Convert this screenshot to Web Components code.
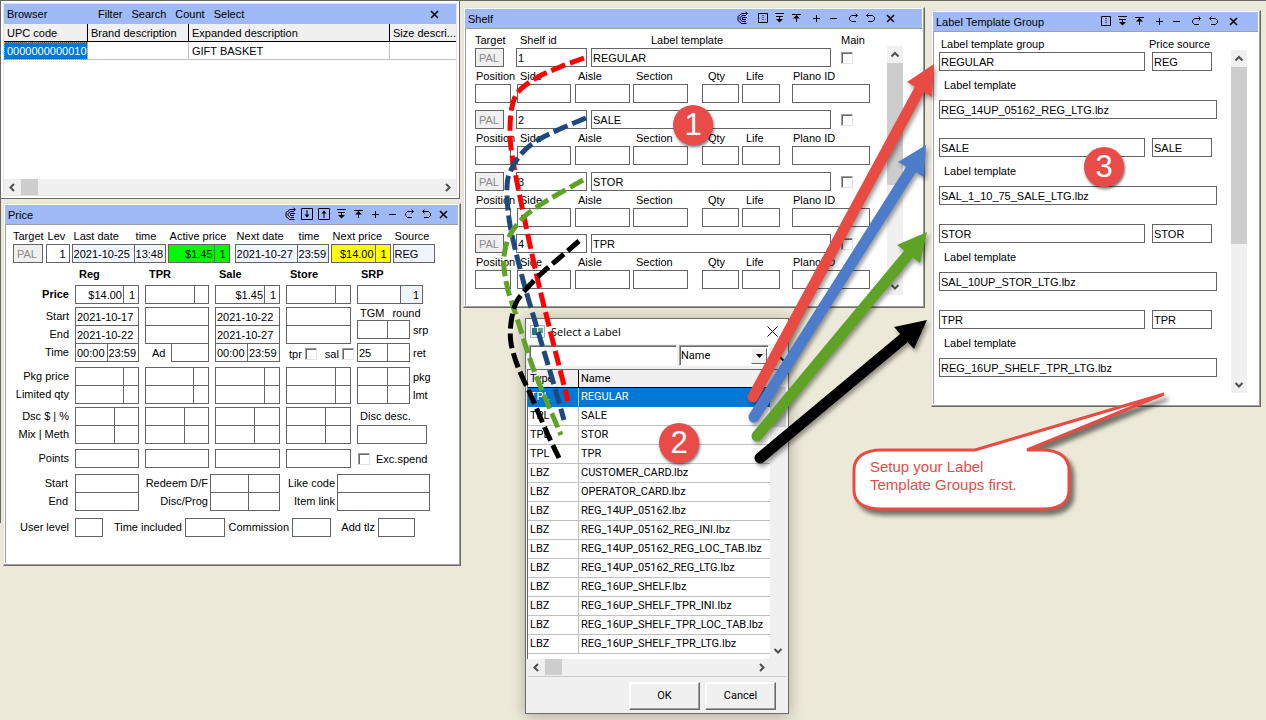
<!DOCTYPE html>
<html lang="en">
<head>
<meta charset="utf-8">
<title>Shelf label setup</title>
<style>
  html, body { margin: 0; }
  body { font: 11px/16px "Liberation Sans", Arial, sans-serif; color: #000; background: #ece9d8; }
</style>
</head>
<body>
<label-desktop></label-desktop>

<script>
const define = (name, html, setup) => {
  const template = document.createElement('template');
  customElements.define(name, class extends HTMLElement {
    constructor() {
      super();
      this.attachShadow({ mode: 'open' });
    }
    connectedCallback() {
      if (this.shadowRoot.childNodes.length) return;
      template.innerHTML = typeof html === 'function' ? html(this) : html;
      this.shadowRoot.append(template.content.cloneNode(true));
      if (setup) setup(this);
    }
  });
};

/* Styles shared by every form panel */
const formCss = `
  * { box-sizing: border-box; }
  label, .lab { white-space: nowrap; display: block; }
  input { font: inherit; color: inherit; border: 0; margin: 0; padding: 0 3px; min-width: 0; width: 100%; height: 17px; background: #fff; border-radius: 0; outline: 0; display: block; }
  .box { background: #646464; padding: 1px; display: grid; gap: 1px; }
  .line { display: grid; gap: 1px; }
  .r { text-align: right; }
  .one { padding-right: 5px; }
  .off { background: #f0f0f0; color: #8a8a8a; }
  .pale { background: #f0f4fc; }
  .green { background: #00f800; }
  .yellow { background: #ffff00; }
  .row { display: flex; }
  input[type=checkbox] { appearance: none; flex: none; width: 12px; height: 12px; padding: 0; border: 1px solid; border-color: #a0a0a0 #e3e3e3 #e3e3e3 #a0a0a0; box-shadow: inset 1px 1px #696969; }
`;
let serial = 0;
const cell = (value = '', name = '', cls = '', id = '') =>
  `<input type="text" id="${id || 'f' + ++serial}" value="${value}" aria-label="${name}" class="${cls}">`;
const line = (cols, ...cells) => `<div class="line" style="grid-template-columns:${cols}">${cells.join('')}</div>`;
const box = (width, ...lines) => `<div class="box" style="width:${width}px">${lines.join('')}</div>`;
const single = (width, value, name, cls, id) => box(width, line('1fr', cell(value, name, cls, id)));

/* Tool icons */
const icons = {
  at: '<path d="M13 3.500H8L4 6.500v4L7.500 13.500h5M12 5.500H8.500L6 7.500v2l2.500 2H12M13 7.500H8.500v2H12M11.500 2l2 1.500-2 2"/>',
  boxdown: '<path d="M2.500 2.500h11v11h-11zM8 4v7"/><path d="M5.500 8.500h5L8 11.500z" fill="#000" stroke="none"/>',
  boxup: '<path d="M2.500 2.500h11v11h-11zM8 5v7"/><path d="M5.500 7.500h5L8 4.500z" fill="#000" stroke="none"/>',
  boxdots: '<path d="M4.500 3.500h9v9h-9z"/><path d="M9 5v6" stroke-dasharray="1 1"/>',
  down: '<path d="M4 3.500h9M5 6.500h7M8.500 6v5"/><path d="M5 9h7l-3.500 3.500z" fill="#000" stroke="none"/>',
  up: '<path d="M4 4.500h9M8.500 6v6"/><path d="M5 8.500h7L8.500 5z" fill="#000" stroke="none"/>',
  plus: '<path d="M5 8.500h7M8.500 5v7"/>',
  minus: '<path d="M5 8.500h7"/>',
  redo: '<path d="M12 5.500H6.500L4.500 7.500v2l2 2H11M10.500 3.500l2 2-2 2"/>',
  undo: '<path d="M5 5.500h5.500L12.500 7.500v2l-2 2H6M6.500 3.500l-2 2 2 2"/>',
  close: '<path d="M5 5l7 7M12 5l-7 7" stroke-width="1.600"/>'
};
define('tool-button', el => `<style>
  :host { display: block; width: 17px; height: 17px; }
  :host([apart]) { margin-left: 3px; }
  button { all: unset; display: block; width: 17px; height: 17px; }
  svg { display: block; fill: none; stroke: #000; }
</style><button aria-label="${el.getAttribute('icon')}"><svg width="17" height="17" viewBox="0 0 17 17">${icons[el.getAttribute('icon')]}</svg></button>`);

/* Scroll bar: --size sets the thumb */
define('scroll-bar', el => {
  const flat = el.hasAttribute('flat');
  const arrow = d => `<svg width="17" height="17" viewBox="0 0 17 17"><path d="${d}"/></svg>`;
  return `<style>
  :host { display: flex; flex-direction: ${flat ? 'row' : 'column'}; justify-content: space-between; background: #f0f0f0; flex: none; ${flat ? 'height' : 'width'}: 16px; }
  svg { display: block; flex: none; fill: none; stroke: #505050; stroke-width: 2; }
  i { flex: 0 0 var(--size, 17px); background: #cdcdcd; margin-${flat ? 'right' : 'bottom'}: auto; }
</style>${arrow(flat ? 'M10 5L6.500 8.500l3.500 3.500' : 'M4.500 10.500L8 7l3.500 3.500')}<i></i>${arrow(flat ? 'M7 5l3.500 3.500L7 12' : 'M4.500 7L8 10.500 11.500 7')}`;
});

/* Raised window frame with a title bar */
define('app-window', `<style>
  :host { display: block; background: #fff; border: 1px solid; border-color: #e3e3e3 #696969 #696969 #e3e3e3; box-shadow: inset -1px -1px #a0a0a0, inset 1px 1px #fff; padding: 1px 2px 2px 1px; box-sizing: border-box; }
  header { display: flex; align-items: center; height: 19px; padding: 0 6px 0 3px; background: #a0b9f7; }
  :host([inset="far"]) header { padding-right: 23px; }
  :host([inset="mid"]) header { padding-right: 16px; }
  h2 { font: inherit; margin: 0; flex: 1; }
  .tools { display: flex; }
  section { border: solid #a0a0a0; border-width: 1px 0 0 1px; }
</style><header><h2><slot name="title"></slot></h2><div class="tools"><slot name="tools"></slot></div></header><section><slot></slot></section>`);
const tools = list => list.split(' ').map(n =>
  `<tool-button slot="tools" icon="${n.replace('*', '')}" ${n.includes('*') ? 'apart' : ''}></tool-button>`).join('');

/* Item browser */
define('item-browser', `<style>
  :host { display: block; background: #fff; border: solid #696969; border-width: 1px; box-sizing: border-box; padding: 2px; }
  .inner { border: 1px solid #e3e3e3; }
  header { display: flex; align-items: center; height: 20px; background: #a0b9f7; padding: 0 13px 0 3px; }
  h2 { font: inherit; margin: 0; width: 91px; }
  nav { display: flex; gap: 9px; flex: 1; }
  nav button { all: unset; }
  .pane { min-height: 155px; }
  table { border-collapse: separate; border-spacing: 0; table-layout: fixed; width: 100%; }
  th { font: inherit; text-align: left; background: #f0f0f0; border: solid #000; border-width: 0 1px 1px 0; }
  th, td { height: 18px; padding: 1px 2px 0 3px; white-space: nowrap; overflow: hidden; line-height: 16px; box-sizing: border-box; }
  td { border: solid #c0c0c0; border-width: 0 1px 1px 0; }
  th:last-child, td:last-child { border-right: 0; }
  td.sel { background: #0078d7; color: #fff; outline: 1px dotted #f08020; outline-offset: -1px; }
</style>
<div class="inner"><header><h2>Browser</h2><nav><button>Filter</button><button>Search</button><button>Count</button><button>Select</button></nav><tool-button icon="close"></tool-button></header>
<div class="pane"><table><colgroup><col style="width:84px"><col style="width:101px"><col style="width:201px"><col></colgroup>
<thead><tr><th>UPC code</th><th>Brand description</th><th>Expanded description</th><th>Size descri...</th></tr></thead>
<tbody><tr><td class="sel">0000000000010</td><td></td><td>GIFT BASKET</td><td></td></tr></tbody></table></div>
<scroll-bar flat></scroll-bar></div>`);

/* Price panel */
define('price-panel', () => {
  const priced = (w, first, v, n, name) => box(w, line(`${first}px 1fr`, cell(v, name + ' price', 'r tight'), cell(n, name + ' quantity', 'r')));
  const grid2 = (w, first, name) => box(w, ...[1, 2].map(i => line(`${first}px 1fr`, cell('', `${name} ${i}`), cell('', `${name} ${i} quantity`))));
  const dates = (w, a, b, name, times) => box(w, line('1fr', cell(a, name + ' start', 'tight')), line('1fr', cell(b, name + ' end', 'tight')),
    times ? line('1fr 1fr', cell(times[0], name + ' from', 'tight'), cell(times[1], name + ' to', 'tight')) : '');
  const head = (cols, labels, content, cls = '') => `<div class="${cls}"><div class="heads" style="grid-template-columns:${cols}">${labels}</div>${content}</div>`;
  return `<style>${formCss}
  :host { display: block; padding: 3px 0 26px; }
  .top { display: flex; gap: 2px; padding-left: 7px; }
  .heads { display: grid; height: 16px; }
  .heads label { padding-left: 2px; }
  .heads label.flush { padding-left: 0; }
  .later { margin-left: 3px; }
  .grid { display: grid; grid-template-columns: 63px 64px 64px 65px 65px 1fr; column-gap: 6px; }
  .bold { font-weight: bold; line-height: 22px; }
  .bold span { padding-left: 4px; }
  .left label, .left b { text-align: right; line-height: 18px; display: block; }
  .g3 { margin-bottom: 3px; } .g5 { margin-bottom: 5px; } .g6 { margin-bottom: 6px; } .g7 { margin-bottom: 7px; }
  .tight { padding: 0 1px; }
  .join { margin-top: -1px; display: flex; justify-content: space-between; align-items: center; }
  .ad { padding-left: 7px; }
  .checks { display: flex; align-items: center; gap: 3px; height: 18px; padding: 2px 4px 0 3px; }
  .checks input + label { padding-left: 5px; }
  .side { display: flex; align-items: center; gap: 3px; }
  .tgm { display: flex; gap: 8px; line-height: 13px; padding-left: 3px; }
  .lower { display: flex; }
  .lower > div.t { text-align: right; line-height: 18px; padding-right: 2px; }
  .foot label { text-align: right; line-height: 18px; padding-right: 3px; }
  .exc { display: flex; align-items: center; gap: 6px; padding-left: 1px; }
  .disc label { line-height: 18px; padding-left: 3px; }
</style>
<div class="top">
  ${head('1fr', '<label for="target" class="flush">Target</label>', single(30, 'PAL', 'Target', 'off', 'target'))}
  ${head('1fr', '<label for="lev">Lev</label>', single(24, '1', 'Lev', 'r', 'lev'))}
  ${head('62px 1fr', '<label for="ld">Last date</label><label for="lt">time</label>', box(94, line('61px 1fr', cell('2021-10-25', 'Last date', 'pale tight', 'ld'), cell('13:48', 'Last time', 'pale tight', 'lt'))))}
  ${head('1fr', '<label for="ap">Active price</label>', box(62, line('45px 1fr', cell('$1.45', 'Active price', 'green r tight', 'ap'), cell('1', 'Active quantity', 'green r'))))}
  ${head('62px 1fr', '<label for="nd">Next date</label><label for="nt">time</label>', box(94, line('61px 1fr', cell('2021-10-27', 'Next date', 'pale tight', 'nd'), cell('23:59', 'Next time', 'pale tight', 'nt'))), 'later')}
  ${head('1fr', '<label for="np">Next price</label>', box(60, line('43px 1fr', cell('$14.00', 'Next price', 'yellow r tight', 'np'), cell('1', 'Next quantity', 'yellow r'))))}
  ${head('1fr', '<label for="so">Source</label>', single(42, 'REG', 'Source', 'pale tight', 'so'))}
</div>
<div class="grid bold"><span></span><span>Reg</span><span>TPR</span><span>Sale</span><span>Store</span><span>SRP</span></div>
<div class="grid left g3"><b>Price</b>${priced(64, 47, '$14.00', '1', 'Reg')}${priced(64, 48, '', '', 'TPR')}${priced(65, 48, '$1.45', '1', 'Sale')}${priced(65, 48, '', '', 'Store')}${box(66, line('42px 1fr', cell('', 'SRP'), cell('1', 'SRP quantity', 'pale r')))}</div>
<div class="grid g5">
  <div class="left"><label>Start</label><label>End</label><label>Time</label></div>
  ${dates(64, '2021-10-17', '2021-10-22', 'Reg', ['00:00', '23:59'])}
  <div>${dates(64, '', '', 'TPR')}<div class="join"><label class="ad" for="ad">Ad</label>${single(38, '', 'Ad', '', 'ad')}</div></div>
  ${dates(65, '2021-10-22', '2021-10-27', 'Sale', ['00:00', '23:59'])}
  <div>${dates(65, '', '', 'Store')}<div class="checks"><label for="ct">tpr</label><input type="checkbox" id="ct"><label for="cs">sal</label><input type="checkbox" id="cs"></div></div>
  <div><div class="tgm"><span>TGM</span><span>round</span></div>
    <div class="side" style="margin-bottom:4px">${box(53, line('29px 1fr', cell('', 'srp TGM', '', 'srp'), cell('', 'srp round')))}<label for="srp">srp</label></div>
    <div class="side">${box(53, line('29px 1fr', cell('25', 'ret TGM', 'tight', 'ret'), cell('', 'ret round')))}<label for="ret">ret</label></div></div>
</div>
<div class="grid g3">
  <div class="left"><label>Pkg price</label><label>Limited qty</label></div>
  ${grid2(64, 47, 'Reg package')}${grid2(64, 47, 'TPR package')}${grid2(65, 48, 'Sale package')}${grid2(65, 48, 'Store package')}
  <div class="side">${grid2(53, 29, 'Package')}<div class="left"><label>pkg</label><label style="text-align:left">lmt</label></div></div>
</div>
<div class="grid g5">
  <div class="left"><label>Dsc $ | %</label><label>Mix | Meth</label></div>
  ${grid2(64, 38, 'Reg discount')}${grid2(64, 38, 'TPR discount')}${grid2(65, 38, 'Sale discount')}${grid2(65, 38, 'Store discount')}
  <div class="disc"><label for="dd">Disc desc.</label>${single(70, '', 'Disc desc.', '', 'dd')}</div>
</div>
<div class="grid left g6"><label>Points</label>${single(64, '', 'Reg points')}${single(64, '', 'TPR points')}${single(65, '', 'Sale points')}${single(65, '', 'Store points')}
  <div class="exc"><input type="checkbox" id="exc"><label for="exc">Exc.spend</label></div></div>
<div class="lower g7">
  <div class="t" style="width:69px;padding-right:7px"><label>Start</label><label>End</label></div>${dates(64, '', '', 'Points')}
  <div class="t" style="width:71px"><label>Redeem D/F</label><label>Disc/Prog</label></div>${grid2(70, 37, 'Redeem')}
  <div class="t" style="width:57px"><label>Like code</label><label>Item link</label></div>${dates(93, '', '', 'Like code')}
</div>
<div class="lower foot">
  <label for="ul" style="width:69px;padding-right:6px">User level</label>${single(28, '', 'User level', '', 'ul')}
  <label for="ti" style="width:82px">Time included</label>${single(40, '', 'Time included', '', 'ti')}
  <label for="co" style="width:67px">Commission</label>${single(39, '', 'Commission', '', 'co')}
  <label for="at" style="width:47px">Add tlz</label>${single(37, '', 'Add tlz', '', 'at')}
</div>`;
});

/* Shelf panel */
define('shelf-panel', () => {
  const subs = [['Position', 36, 6, 1], ['Side', 54, 4, 3], ['Aisle', 55, 3, 3], ['Section', 55, 14, 3], ['Qty', 37, 3, 6], ['Life', 38, 12, 4], ['Plano ID', 78, 0, 1]];
  const shelf = (n, name) => `<div class="shelf"><div class="row main">${single(29, 'PAL', 'Target', 'off', 'target' + n)}${single(71, n, 'Shelf id', 'tight', 'shelf' + n)}${single(240, name, 'Label template', 'tight', 'tpl' + n)}<input type="checkbox" id="main${n}" aria-label="Main"></div>
  <div class="row">${subs.map(([t, w, g, i]) => `<div style="width:${w}px;margin-right:${g}px"><label for="${t[0]}${t[1]}${n}" style="padding-left:${i}px">${t}</label>${single(w, '', t, '', t[0] + t[1] + n)}</div>`).join('')}</div></div>`;
  return `<style>${formCss}
  :host { display: flex; gap: 17px; padding: 3px 0 10px 9px; }
  .heads { display: grid; grid-template-columns: 45px 131px 190px 1fr; }
  .shelves { padding-bottom: 6px; }
  .shelf + .shelf { margin-top: 7px; }
  .shelf label { line-height: 16px; padding-top: 1px; }
  .tight { padding: 0 1px; }
  .main { align-items: center; }
  .main > :nth-child(1) { margin-right: 12px; }
  .main > :nth-child(2) { margin-right: 4px; }
  .main > :nth-child(3) { margin-right: 10px; }
  scroll-bar { margin-top: 14px; --size: 122px; }
</style><div class="shelves"><div class="heads"><label for="target1">Target</label><label for="shelf1">Shelf id</label><label for="tpl1">Label template</label><label for="main1">Main</label></div>
${['REGULAR', 'SALE', 'STOR', 'TPR'].map((s, i) => shelf(i + 1, s)).join('')}</div><scroll-bar></scroll-bar>`;
});

/* Label template groups */
define('group-panel', () => {
  const group = ([name, src, tpl], i) => `<div class="group"><div class="row">${single(206, name, 'Label template group', '', 'g' + i)}${single(60, src, 'Price source', '', 's' + i)}</div><label for="t${i}">Label template</label>${single(278, tpl, 'Label template', '', 't' + i)}</div>`;
  return `<style>${formCss}
  :host { display: flex; gap: 14px; padding: 4px 0 11px 5px; }
  .heads { display: grid; grid-template-columns: 208px 1fr; padding-left: 2px; }
  .groups { padding-bottom: 16px; }
  input { padding: 0 1px; }
  .row { gap: 7px; }
  .group label { line-height: 29px; padding-left: 5px; }
  .group + .group { margin-top: 19px; }
  scroll-bar { margin-top: 14px; --size: 177px; }
</style><div class="groups"><div class="heads"><label for="g0">Label template group</label><label for="s0">Price source</label></div>
${[['REGULAR', 'REG', 'REG_14UP_05162_REG_LTG.lbz'], ['SALE', 'SALE', 'SAL_1_10_75_SALE_LTG.lbz'], ['STOR', 'STOR', 'SAL_10UP_STOR_LTG.lbz'], ['TPR', 'TPR', 'REG_16UP_SHELF_TPR_LTG.lbz']].map(group).join('')}</div><scroll-bar></scroll-bar>`;
});

/* Label picker dialog */
define('label-picker', () => {
  const rows = ['TPL REGULAR', 'TPL SALE', 'TPL STOR', 'TPL TPR', ...['CUSTOMER_CARD', 'OPERATOR_CARD', 'REG_14UP_05162', 'REG_14UP_05162_REG_INI', 'REG_14UP_05162_REG_LOC_TAB', 'REG_14UP_05162_REG_LTG', 'REG_16UP_SHELF', 'REG_16UP_SHELF_TPR_INI', 'REG_16UP_SHELF_TPR_LOC_TAB', 'REG_16UP_SHELF_TPR_LTG'].map(n => `LBZ ${n}.lbz`)];
  return `<style>
  * { box-sizing: border-box; }
  :host { display: block; box-sizing: border-box; border: 1px solid #6b6b6b; background: #f0f0f0; box-shadow: 0 2px 14px rgba(0,0,0,.28); font-family: Roboto, "Liberation Sans", sans-serif; }
  header { display: flex; align-items: center; height: 25px; background: #fff; padding: 0 9px 0 4px; gap: 6px; }
  h2 { font: 11px/16px "Open Sans", sans-serif; margin: 0; flex: 1; }
  header button { all: unset; height: 13px; }
  svg { display: block; }
  .find { display: flex; gap: 2px; padding: 1px 3px 3px 3px; }
  .find input, .pick { font: inherit; height: 21px; background: #fff; border: 1px solid; border-color: #a0a0a0 #fff #fff #a0a0a0; box-shadow: inset 1px 1px #696969; border-radius: 0; padding: 0 3px; outline: 0; }
  .find input { width: 148px; }
  .pick { display: flex; width: 91px; padding: 2px 1px 1px 1px; }
  select { appearance: none; border: 0; background: none; font: inherit; padding: 0; width: 100%; color: #000; border-radius: 0; }
  .drop { flex: 0 0 16px; background: #f0f0f0; border: 1px solid; border-color: #fff #696969 #696969 #fff; display: grid; place-items: center; }
  .go { all: unset; padding: 6px 0 0 7px; }
  .list { display: flex; margin: 0 2px 0 1px; border: 1px solid #696969; border-right: 0; border-bottom: 0; background: #fff; }
  table { border-collapse: separate; border-spacing: 0; table-layout: fixed; width: 100%; background: #fff; margin-bottom: 5px; }
  .wrap { flex: 1; min-width: 0; }
  th { font: inherit; text-align: left; height: 18px; background: #f0f0f0; border: solid #000; border-width: 0 1px 1px 0; padding: 0 2px; }
  td { height: 19px; padding: 0 2px; border: solid #c0c0c0; border-width: 0 1px 1px 0; white-space: nowrap; }
  th:last-child, td:last-child { border-right: 0; }
  tr.sel td { background: #0078d7; color: #fff; border-bottom-color: #0078d7; }
  .list scroll-bar { --size: 40px; }
  .across { margin: 0 18px 0 2px; }
  footer { display: flex; justify-content: flex-end; gap: 5px; margin: 1px 2px 0; padding: 5px 10px 3px; border-top: 1px solid #c8c8c8; }
  footer button { font: inherit; width: 71px; height: 28px; background: #f0f0f0; border: 1px solid; border-color: #fff #696969 #696969 #fff; box-shadow: inset -1px -1px #a0a0a0, inset 1px 1px #fff; border-radius: 0; padding: 0; color: #000; }
</style>
<header><svg width="15" height="14" viewBox="0 0 15 14"><path d="M.5.5h14v12H.5z" fill="#eef2f4" stroke="#a8b4ba"/><path d="M2 3h5v7H2z" fill="#2f6f8a"/><path d="M8 3h5v5H8z" fill="#5fa58c"/></svg><h2>Select a Label</h2><button aria-label="Close"><svg width="13" height="13" viewBox="0 0 13 13"><path d="M1.500 1.500l10 10M11.500 1.500l-10 10" stroke="#000"/></svg></button></header>
<div class="find"><input type="text" aria-label="Find"><div class="pick"><select aria-label="Search by"><option>Name</option></select><span class="drop"><svg width="7" height="4" viewBox="0 0 7 4"><path d="M0 0h7L3.500 4z"/></svg></span></div><button class="go" aria-label="Search"><svg width="7" height="7" viewBox="0 0 7 7"><path d="M1 1l5 5" stroke="#000" stroke-width="2"/></svg></button></div>
<div class="list"><div class="wrap"><table><colgroup><col style="width:51px"><col></colgroup><thead><tr><th>Type</th><th>Name</th></tr></thead><tbody>
${rows.map((r, i) => `<tr${i ? '' : ' class="sel"'}><td>${r.slice(0, 3)}</td><td>${r.slice(4)}</td></tr>`).join('')}</tbody></table></div><scroll-bar></scroll-bar></div>
<scroll-bar class="across" flat></scroll-bar>
<footer><button>OK</button><button>Cancel</button></footer>`;
});

/* Numbered marker */
define('step-badge', `<style>
  :host { display: grid; place-items: center; width: 40px; height: 40px; border-radius: 50%; background: #e94b48; color: #fff; font-size: 31px; line-height: 40px; box-shadow: 1px 2px 3px rgba(0,0,0,.55); }
</style><slot></slot>`);

/* Dashed links and arrows drawn across the windows */
const smooth = pts => pts.slice(0, -1).reduce((d, p, i) => {
  const a = pts[i - 1] || p, n = pts[i + 1], z = pts[i + 2] || n;
  return d + `C${p[0] + (n[0] - a[0]) / 6} ${p[1] + (n[1] - a[1]) / 6} ${n[0] - (z[0] - p[0]) / 6} ${n[1] - (z[1] - p[1]) / 6} ${n[0]} ${n[1]}`;
}, `M${pts[0]}`);
define('link-layer', () => {
  const links = [
    ['#ff0000', [[584, 58], [560, 67], [538, 77], [519, 91], [512, 107], [510, 130], [512, 155], [521, 202], [537, 277], [552, 338], [568, 401]]],
    ['#1f497d', [[586, 118], [560, 129], [538, 140], [522, 153], [511, 170], [507, 187], [510, 225], [523, 280], [540, 338], [552, 378], [564, 420]]],
    ['#5ea226', [[583, 180], [553, 197], [540, 205], [525, 216], [511, 233], [505, 250], [504, 267], [508, 290], [517, 318], [532, 365], [547, 402], [561, 435]]],
    ['#000000', [[579, 241], [557, 260], [543, 272], [528, 287], [516, 303], [511, 323], [511, 343], [518, 367], [532, 398], [548, 435], [559, 458]]]
  ];
  const arrows = [
    ['#e94b43', [753, 397], [934, 64], [907, 82], [932, 97]],
    ['#4d7ccb', [754, 417], [926, 145], [898, 162], [924, 177]],
    ['#5ea226', [757, 436], [927, 232], [897, 245], [920, 263]],
    ['#000000', [760, 458], [927, 320], [894, 327], [914, 349]]
  ];
  return `<style>
  :host { display: block; pointer-events: none; }
  svg { display: block; overflow: visible; filter: drop-shadow(2px 3px 2px rgba(0,0,0,.4)); }
  .dash { filter: none; position: absolute; }
</style>
<svg class="dash" width="1" height="1">${links.map(([c, p]) => `<path d="${smooth(p)}" fill="none" stroke="${c}" stroke-width="5" stroke-dasharray="15 5"/>`).join('')}</svg>
<svg width="1" height="1">${arrows.reverse().map(([c, a, t, l, r]) => `<path d="M${a}L${(l[0] + r[0]) / 2} ${(l[1] + r[1]) / 2}" stroke="${c}" stroke-width="11" stroke-linecap="round"/><path d="M${t}L${l}L${r}z" fill="${c}"/>`).join('')}</svg>`;
});

define('speech-note', `<style>
  :host { display: block; width: 219px; box-sizing: border-box; padding: 66px 0 0 18px; height: 120px; color: #e94b48; font-size: 15px; line-height: 18px; }
  svg { position: absolute; left: 0; top: 0; overflow: visible; filter: drop-shadow(4px 5px 2px rgba(0,0,0,.5)); }
  p { margin: 0; position: relative; white-space: nowrap; }
</style><svg width="320" height="120" viewBox="0 0 320 120"><path d="M30 58H123L312 2L175 58H190C208 58 217 66 217 78V98C217 110 208 117 190 117H30C11 117 2 110 2 98V78C2 66 11 58 30 58Z" fill="#fff" stroke="#e94b43" stroke-width="3"/></svg><p><slot></slot></p>`);

define('label-desktop', `<style>
  :host { display: block; position: relative; min-height: 100vh; overflow: hidden; box-sizing: border-box; border-top: 1px solid #696969;
    background: linear-gradient(#696969, #696969) 0 0 / 1px 522px no-repeat #ece9d8; }
  :host > * { position: absolute; }
  .browser { left: 0; top: -1px; width: 460px; }
  .price { left: 3px; top: 202px; width: 458px; }
  .shelf { left: 463px; top: 6px; width: 462px; }
  .groups { left: 931px; top: 9px; width: 330px; }
  .picker { left: 525px; top: 317px; width: 264px; }
  link-layer { left: 0; top: -1px; }
  .one { left: 673px; top: 104px; } .two { left: 659px; top: 422px; } .three { left: 1084px; top: 146px; }
  .note { left: 852px; top: 391px; }
</style>
<item-browser class="browser"></item-browser>
<app-window class="price"><span slot="title">Price</span>${tools('at boxdown boxup down up plus minus redo undo close')}<price-panel></price-panel></app-window>
<app-window class="shelf" inset="far"><span slot="title">Shelf</span>${tools('at boxdots* down up plus* minus redo* undo close*')}<shelf-panel></shelf-panel></app-window>
<app-window class="groups" inset="mid"><span slot="title">Label Template Group</span>${tools('boxdots down up plus* minus redo* undo close*')}<group-panel></group-panel></app-window>
<label-picker class="picker"></label-picker>
<link-layer></link-layer>
<step-badge class="one">1</step-badge><step-badge class="two">2</step-badge><step-badge class="three">3</step-badge>
<speech-note class="note">Setup your Label<br>Template Groups first.</speech-note>`);
</script>
</body>
</html>
